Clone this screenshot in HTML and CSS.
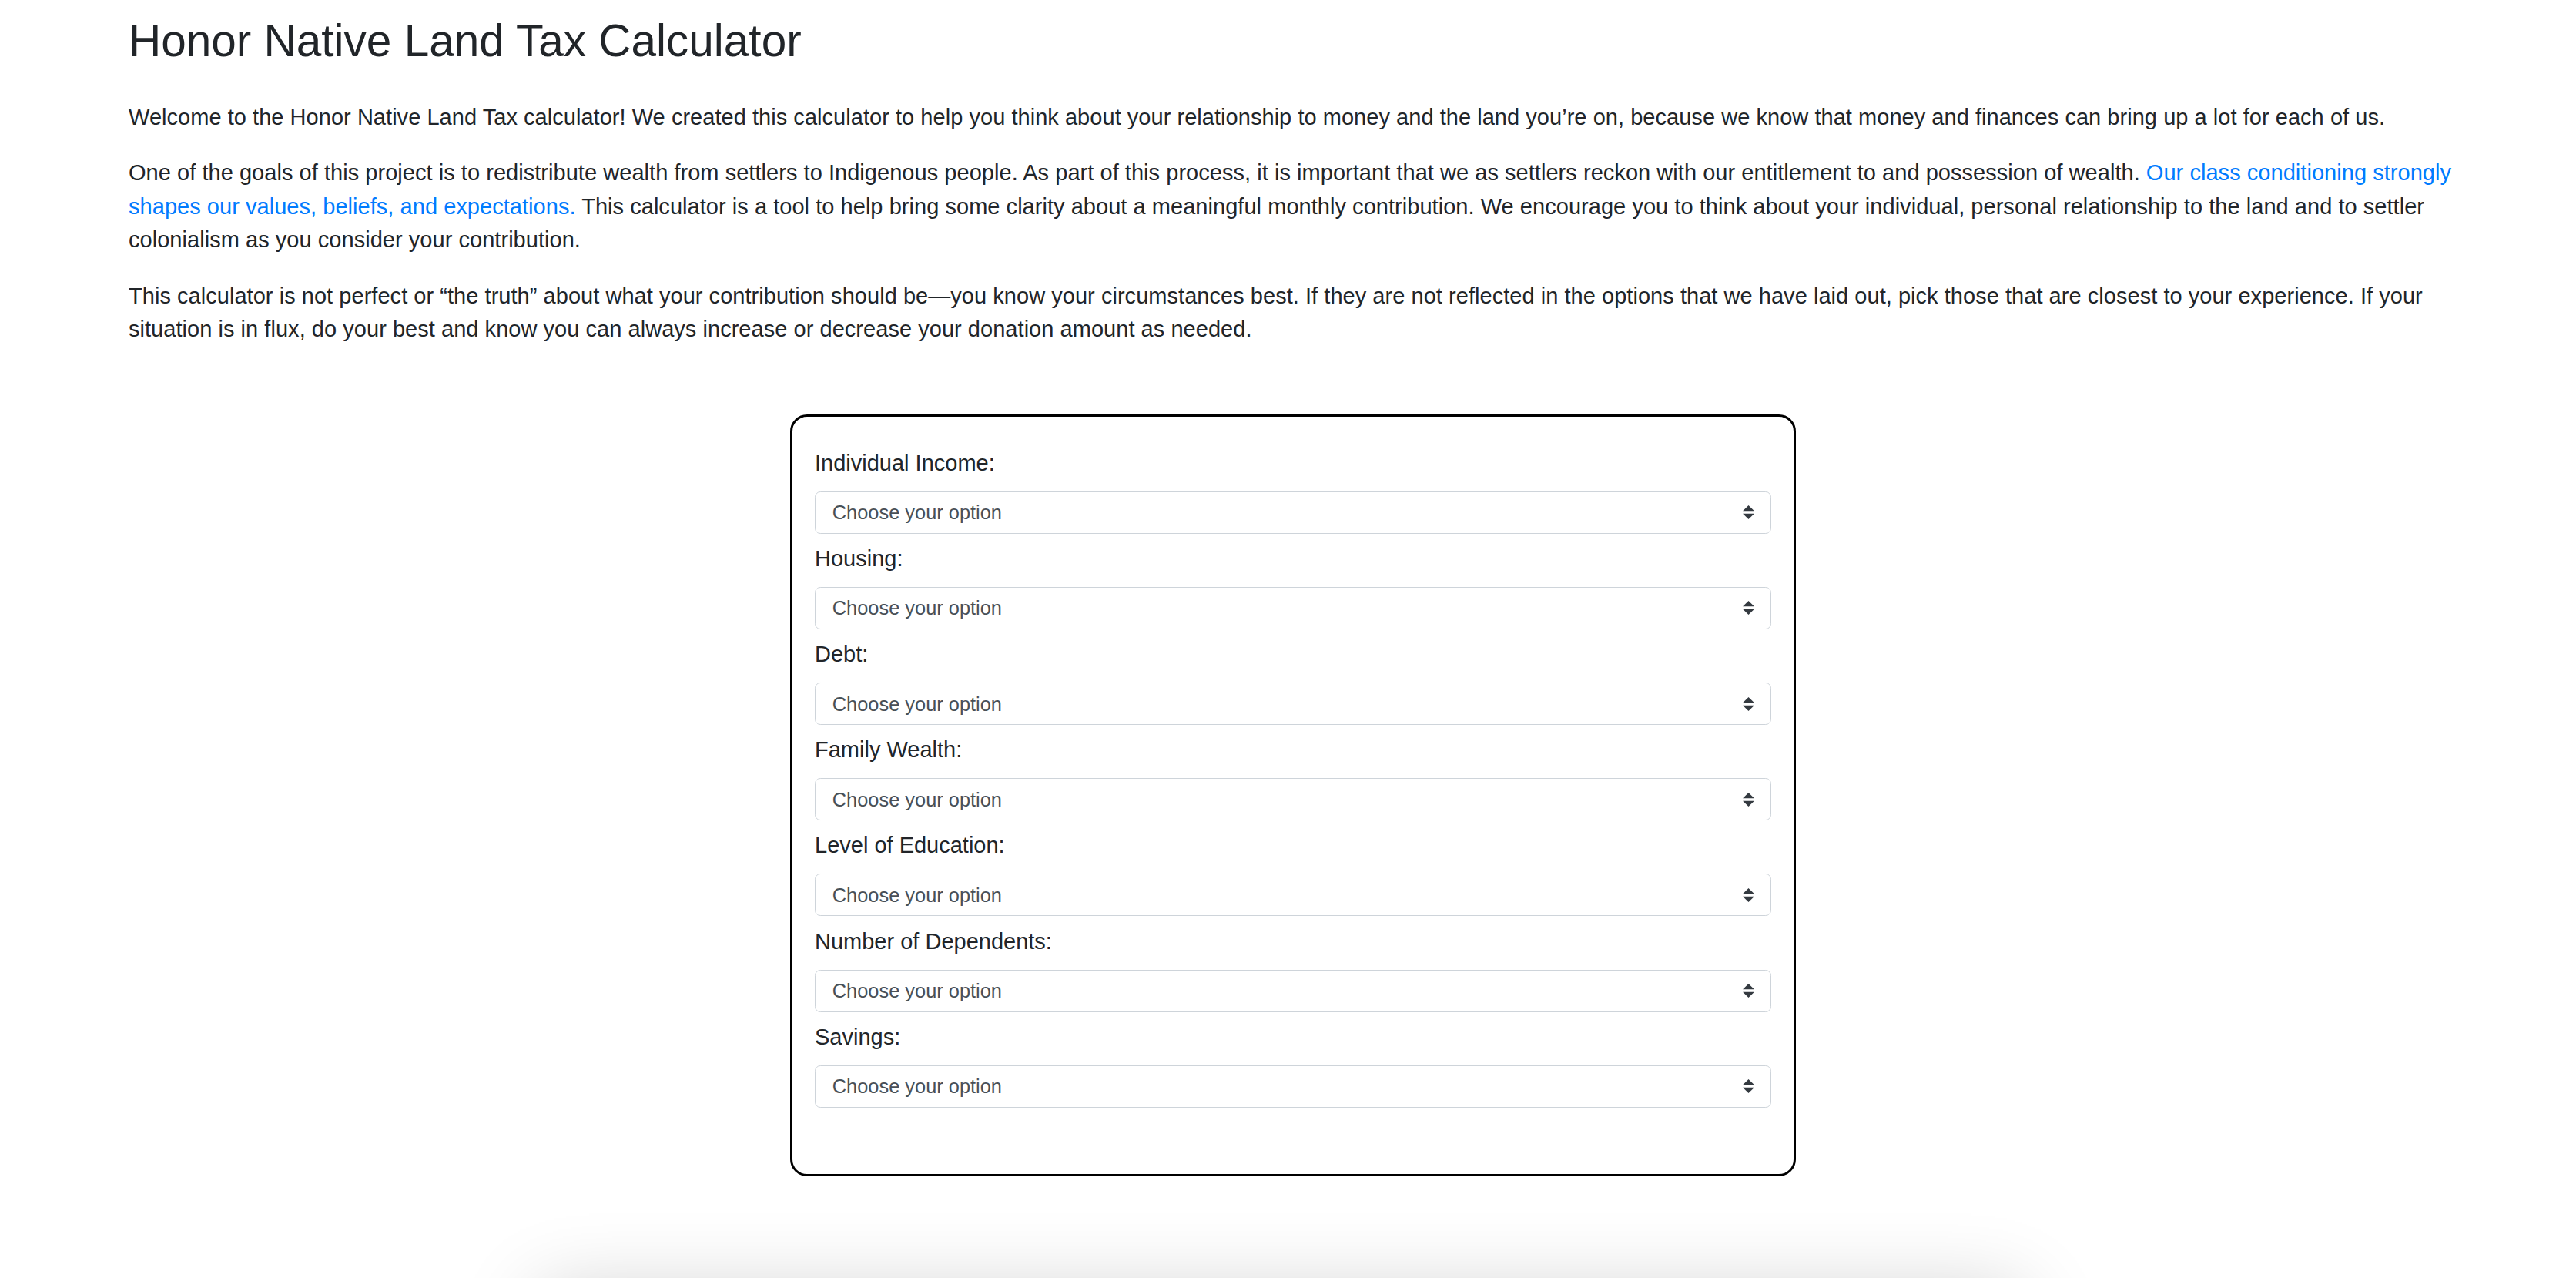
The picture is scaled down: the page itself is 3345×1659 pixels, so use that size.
FILE: index.html
```html
<!DOCTYPE html>
<html lang="en">
<head>
<meta charset="utf-8">
<title>Honor Native Land Tax Calculator</title>
<link rel="stylesheet" href="styles.css">
</head>
<body>
<div class="container">
  <h1 class="title">Honor Native Land Tax Calculator</h1>
  <p>Welcome to the Honor Native Land Tax calculator! We created this calculator to help you think about your relationship to money and the land you’re on, because we know that money and finances can bring up a lot for each of us.</p>
  <p>One of the goals of this project is to redistribute wealth from settlers to Indigenous people. As part of this process, it is important that we as settlers reckon with our entitlement to and possession of wealth. <a href="#">Our class conditioning strongly shapes our values, beliefs, and expectations.</a> This calculator is a tool to help bring some clarity about a meaningful monthly contribution. We encourage you to think about your individual, personal relationship to the land and to settler colonialism as you consider your contribution.</p>
  <p>This calculator is not perfect or “the truth” about what your contribution should be—you know your circumstances best. If they are not reflected in the options that we have laid out, pick those that are closest to your experience. If your situation is in flux, do your best and know you can always increase or decrease your donation amount as needed.</p>
</div>
<section class="calc-section">
  <form class="calc-box">
    <label for="income">Individual Income:</label>
    <select id="income" class="field"><option>Choose your option</option></select>
    <label for="housing">Housing:</label>
    <select id="housing" class="field"><option>Choose your option</option></select>
    <label for="debt">Debt:</label>
    <select id="debt" class="field"><option>Choose your option</option></select>
    <label for="wealth">Family Wealth:</label>
    <select id="wealth" class="field"><option>Choose your option</option></select>
    <label for="education">Level of Education:</label>
    <select id="education" class="field"><option>Choose your option</option></select>
    <label for="dependents">Number of Dependents:</label>
    <select id="dependents" class="field"><option>Choose your option</option></select>
    <label for="savings">Savings:</label>
    <select id="savings" class="field"><option>Choose your option</option></select>
  </form>
</section>
<section class="result-section">
  <div class="result-card"></div>
</section>
</body>
</html>
```
FILE: styles.css
```css
html, body {
  margin: 0;
  padding: 0;
  background: #fff;
}
body {
  font-family: "Liberation Sans", Arial, Helvetica, sans-serif;
  font-size: 29px;
  line-height: 43.5px;
  color: #212529;
  overflow: hidden;
}
.container {
  padding: 17.6px 0 0 167px;
  width: 3048px;
}
.title {
  margin: 0 0 42.9px 0;
  font-size: 58.5px;
  line-height: 1.2;
  font-weight: 400;
  color: #212529;
}
p {
  margin: 0 0 29px 0;
  letter-spacing: 0.04px;
}
a {
  color: #007bff;
  text-decoration: none;
}
.calc-section {
  margin-top: 88px;
  display: flex;
  justify-content: center;
  padding-left: 13px;
}
.calc-box {
  width: 1242px;
  padding: 39px 29px 75px 29px;
  border: 3px solid #000;
  border-radius: 22px;
  display: flex;
  flex-direction: column;
}
.calc-box label {
  display: block;
  margin-bottom: 14.5px;
  font-size: 29px;
  line-height: 43.5px;
  color: #212529;
}
.field {
  -webkit-appearance: none;
  appearance: none;
  display: block;
  width: 100%;
  height: 55px;
  margin: 0 0 11.2px 0;
  padding: 0 51px 0 21.75px;
  font-family: "Liberation Sans", Arial, Helvetica, sans-serif;
  font-size: 25.4px;
  color: #495057;
  background-color: #fff;
  background-image: url("data:image/svg+xml,%3csvg xmlns='http://www.w3.org/2000/svg' width='4' height='5' viewBox='0 0 4 5'%3e%3cpath fill='%23343a40' d='M2 0L0 2h4zm0 5L0 3h4z'/%3e%3c/svg%3e");
  background-repeat: no-repeat;
  background-position: right 22px center;
  background-size: 14.5px 18px;
  border: 1px solid #ced4da;
  border-radius: 7.25px;
  box-sizing: border-box;
}
.result-section {
  margin-top: 152px;
  display: flex;
  justify-content: center;
  padding-right: 20px;
}
.result-card {
  width: 1925px;
  height: 400px;
  background: #fff;
  box-shadow: 0 0 100px rgba(0, 0, 0, 0.2);
}
```
